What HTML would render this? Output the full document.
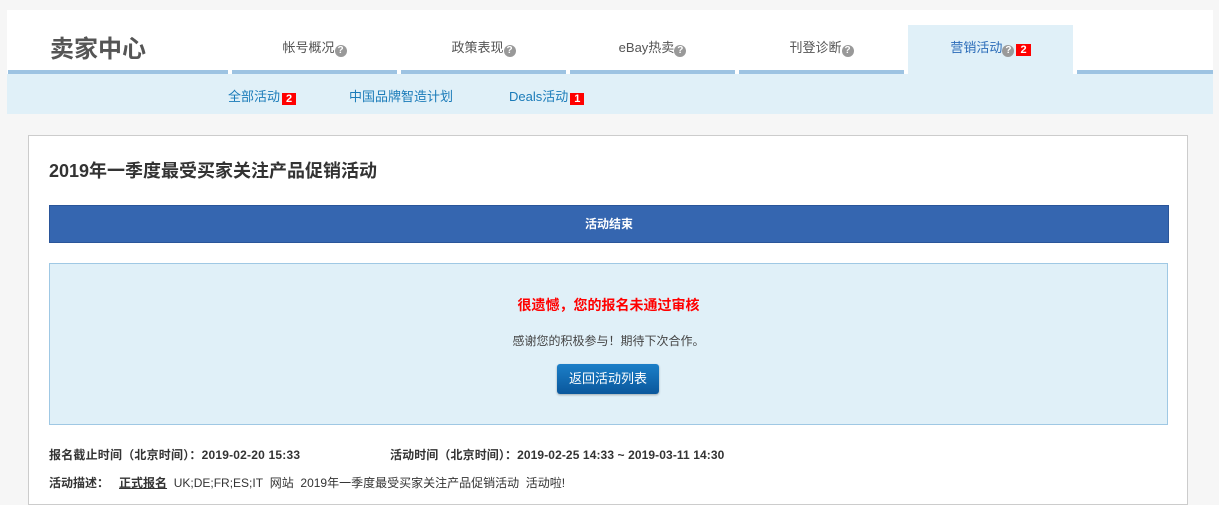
<!DOCTYPE html>
<html><head><meta charset="utf-8"><style>
*{margin:0;padding:0;box-sizing:border-box}
body{width:1219px;height:493px;overflow:hidden;background:#f6f6f6;font-family:"Liberation Sans","Noto Sans CJK SC",sans-serif;position:relative}
.abs{position:absolute}
.hdr{left:7px;top:10px;width:1206px;height:64px;background:#fff}
.bar{top:70px;height:4px;background:#9dc3e2}
.tab{top:37px;width:165px;text-align:center;font-size:13px;color:#555}
.q{display:inline-block;width:12px;height:12px;border-radius:50%;background:#999;color:#fff;font-size:10px;line-height:12px;text-align:center;font-weight:bold;vertical-align:-1px}
.badge{display:inline-block;background:#f00;color:#fff;font-size:11px;font-weight:bold;padding:0 4px;line-height:12px;margin-left:2px;vertical-align:-1px}
.sub{left:7px;top:74px;width:1206px;height:40px;background:#e0f0f8}
.sl{top:86px;font-size:13px;color:#1a7bb9}
.box{left:28px;top:135px;width:1160px;height:370px;background:#fff;border:1px solid #ccc}
</style></head><body>
<div class="abs hdr"></div>
<div class="abs" style="left:50px;top:29px;font-size:24px;font-weight:bold;color:#555">卖家中心</div>
<div class="abs bar" style="left:8px;width:220px"></div>
<div class="abs bar" style="left:232px;width:165px"></div>
<div class="abs bar" style="left:401px;width:165px"></div>
<div class="abs bar" style="left:570px;width:165px"></div>
<div class="abs bar" style="left:739px;width:165px"></div>
<div class="abs bar" style="left:1077px;width:136px"></div>
<div class="abs" style="left:908px;top:25px;width:165px;height:50px;background:#e0f0f8"></div>
<div class="abs tab" style="left:232px">帐号概况<span class="q">?</span></div>
<div class="abs tab" style="left:401px">政策表现<span class="q">?</span></div>
<div class="abs tab" style="left:570px">eBay热卖<span class="q">?</span></div>
<div class="abs tab" style="left:739px">刊登诊断<span class="q">?</span></div>
<div class="abs tab" style="left:908px;color:#2a6bb8">营销活动<span class="q">?</span><span class="badge">2</span></div>
<div class="abs sub"></div>
<div class="abs sl" style="left:228px">全部活动<span class="badge">2</span></div>
<div class="abs sl" style="left:349px">中国品牌智造计划</div>
<div class="abs sl" style="left:509px">Deals活动<span class="badge">1</span></div>
<div class="abs box"></div>
<div class="abs" style="left:49px;top:157px;font-size:18px;font-weight:bold;color:#333">2019年一季度最受买家关注产品促销活动</div>
<div class="abs" style="left:49px;top:205px;width:1120px;height:38px;background:#3566b0;border:1px solid #2a5599;color:#fff;font-size:12px;font-weight:bold;text-align:center;line-height:36px">活动结束</div>
<div class="abs" style="left:49px;top:263px;width:1119px;height:162px;background:#e0f0f8;border:1px solid #9fc8e4"></div>
<div class="abs" style="left:49px;top:295px;width:1119px;text-align:center;color:#f00;font-size:14px;font-weight:bold">很遗憾，您的报名未通过审核</div>
<div class="abs" style="left:49px;top:332px;width:1119px;text-align:center;color:#444;font-size:12px">感谢您的积极参与！期待下次合作。</div>
<div class="abs" style="left:557px;top:364px;width:102px;height:30px;background:linear-gradient(#1c7fc8,#0a579c);border-radius:3px;color:#fff;font-size:13px;text-align:center;line-height:30px;box-shadow:0 1px 2px rgba(0,0,0,.3)">返回活动列表</div>
<div class="abs" style="left:49px;top:446px;font-size:12px;font-weight:bold;color:#333;letter-spacing:.2px">报名截止时间（北京时间）：2019-02-20 15:33</div>
<div class="abs" style="left:390px;top:446px;font-size:12px;font-weight:bold;color:#333;letter-spacing:.1px">活动时间（北京时间）：2019-02-25 14:33 ~ 2019-03-11 14:30</div>
<div class="abs" style="left:49px;top:474px;font-size:12px;color:#333"><b>活动描述：</b>&nbsp;&nbsp;&nbsp;<b style="text-decoration:underline">正式报名</b>&nbsp; UK;DE;FR;ES;IT&nbsp; 网站&nbsp; 2019年一季度最受买家关注产品促销活动&nbsp; 活动啦!</div>
</body></html>
